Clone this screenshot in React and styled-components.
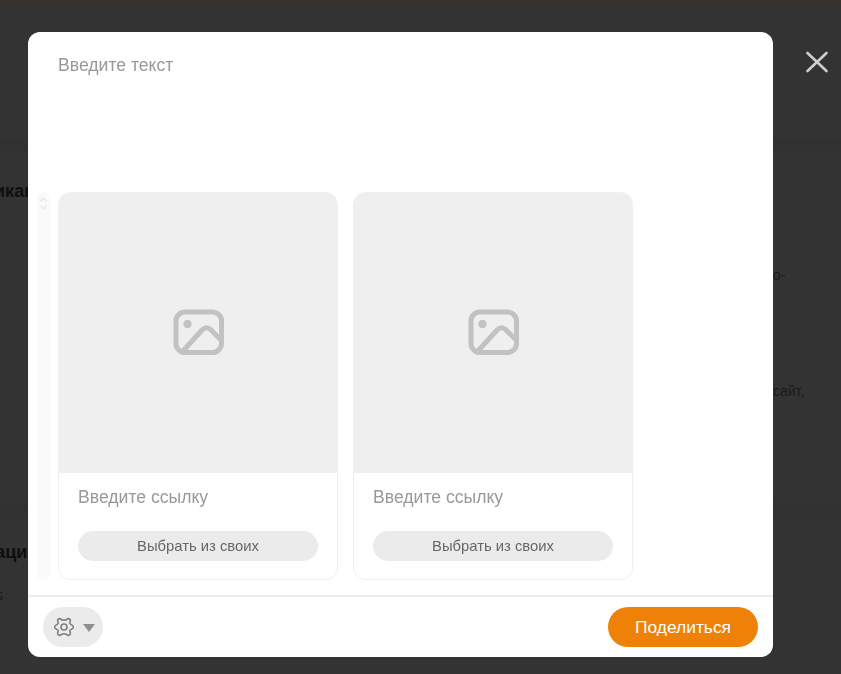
import styled, { createGlobalStyle } from "styled-components";

const GlobalStyle = createGlobalStyle`
  html, body {
    margin: 0;
    height: 100%;
    overflow: hidden;
    background: #333333;
    font-family: "Liberation Sans", Arial, sans-serif;
  }
`;

function ImageIcon() {
  return (
    <svg width="52" height="46" viewBox="0 0 52 46" fill="none" stroke="#c2c2c2" strokeWidth="5">
      <rect x="3" y="3" width="45.5" height="40.5" rx="9" />
      <circle cx="14.5" cy="15" r="4.2" fill="#c2c2c2" stroke="none" />
      <path d="M10 42 L29 21 C31.5 18 35 18 37.5 20.5 L48 31" />
    </svg>
  );
}

function GearIcon() {
  return (
    <svg width="20" height="20" viewBox="0 0 20 20" fill="none" stroke="#808080" strokeWidth="1.6" strokeLinejoin="round">
      <path d="M10 3.3 C13 3.3 13.5 .6 15.6 2 C17.6 3.4 15.2 5.2 16 6.7 C16.8 8 19.4 8 19.4 10 C19.4 12 16.8 12 16 13.3 C15.2 14.8 17.6 16.6 15.6 18 C13.5 19.4 13 16.7 10 16.7 C7 16.7 6.5 19.4 4.4 18 C2.4 16.6 4.8 14.8 4 13.3 C3.2 12 .6 12 .6 10 C.6 8 3.2 8 4 6.7 C4.8 5.2 2.4 3.4 4.4 2 C6.5 .6 7 3.3 10 3.3 Z" />
      <circle cx="10" cy="10" r="3" />
    </svg>
  );
}

function CloseIcon() {
  return (
    <svg width="24" height="24" viewBox="0 0 24 24" stroke="#cfcfcf" strokeWidth="2.6" strokeLinecap="round">
      <path d="M2.5 3 L21.5 21 M21.5 3 L2.5 21" />
    </svg>
  );
}

function ScrollArrows() {
  return (
    <svg width="9" height="15" viewBox="0 0 9 15" fill="none" stroke="#e9e9e9" strokeWidth="1.5">
      <path d="M1.5 5.5 L4.5 2 L7.5 5.5" />
      <path d="M1.5 9.5 L4.5 13 L7.5 9.5" />
    </svg>
  );
}

function LinkCard() {
  return (
    <Card>
      <Preview>
        <ImageIcon />
      </Preview>
      <CardBody>
        <LinkField>Введите ссылку</LinkField>
        <PickButton>Выбрать из своих</PickButton>
      </CardBody>
    </Card>
  );
}

export default function App() {
  return (
    <>
      <GlobalStyle />
      <Page>
        <TopStrip />
        <Band $height={135} />
        <Gutter $height={14} />
        <Section $height={351} $pad={28}>
          <SectionTitle $shift={-51}>Публикации</SectionTitle>
          <Divider $gap={10} />
          <SideText $gap={53}>о-</SideText>
          <SideText $gap={98}>сайт,</SideText>
          <Divider $gap={3} />
        </Section>
        <Gutter $height={16} />
        <Section $height={155} $pad={22}>
          <SectionTitle $shift={-70}>Публикации</SectionTitle>
          <Divider $gap={14} />
          <FooterNote>s</FooterNote>
        </Section>
      </Page>
      <Overlay>
        <Modal>
          <TextArea>Введите текст</TextArea>
          <Attachments>
            <ScrollTrack>
              <ScrollArrows />
            </ScrollTrack>
            <LinkCard />
            <LinkCard />
          </Attachments>
          <Footer>
            <SettingsButton>
              <GearIcon />
              <Caret />
            </SettingsButton>
            <ShareButton>Поделиться</ShareButton>
          </Footer>
        </Modal>
        <CloseButton>
          <CloseIcon />
        </CloseButton>
      </Overlay>
    </>
  );
}

const Page = styled.div`
  display: flex;
  flex-direction: column;
  height: 674px;
  overflow: hidden;
`;

const TopStrip = styled.div`
  height: 3px;
  flex: none;
  background: #38322e;
`;

const Band = styled.div`
  height: ${({ $height }) => $height}px;
  flex: none;
  background: #333333;
`;

const Gutter = styled.div`
  height: ${({ $height }) => $height}px;
  flex: none;
  background: #313131;
`;

const Section = styled.section`
  height: ${({ $height }) => $height}px;
  flex: none;
  display: flex;
  flex-direction: column;
  box-sizing: border-box;
  padding-top: ${({ $pad }) => $pad}px;
  background: #333333;
`;

const SectionTitle = styled.h3`
  margin: 0 0 0 ${({ $shift }) => $shift}px;
  font-size: 18px;
  line-height: 22px;
  font-weight: 700;
  white-space: nowrap;
  color: #0e0e0e;
`;

const Divider = styled.div`
  height: 1px;
  flex: none;
  width: 40px;
  margin: ${({ $gap }) => $gap}px 0 0 775px;
  background: #303030;
`;

const SideText = styled.span`
  margin: ${({ $gap }) => $gap}px 0 0 773px;
  font-size: 14px;
  line-height: 18px;
  color: #1a1a1a;
`;

const FooterNote = styled.span`
  margin: 8px 0 0 -4px;
  font-size: 14px;
  line-height: 18px;
  color: #1a1a1a;
`;

const Overlay = styled.div`
  position: fixed;
  inset: 0;
`;

const Modal = styled.div`
  position: absolute;
  top: 32px;
  left: 28px;
  width: 745px;
  height: 625px;
  display: flex;
  flex-direction: column;
  box-sizing: border-box;
  background: #fff;
  border-radius: 12px;
  overflow: hidden;
`;

const TextArea = styled.div`
  height: 160px;
  flex: none;
  box-sizing: border-box;
  padding: 23px 30px 0;
  font-size: 17.6px;
  line-height: 20px;
  color: #999;
`;

const Attachments = styled.div`
  display: flex;
  height: 388px;
  flex: none;
  padding-left: 9px;
  gap: 15px;
`;

const ScrollTrack = styled.div`
  width: 13px;
  flex: none;
  margin-right: -7px;
  background: #fafafa;
  border-radius: 6px;
  display: flex;
  justify-content: center;
  padding-top: 4px;
  box-sizing: border-box;
`;

const Card = styled.div`
  width: 280px;
  flex: none;
  display: flex;
  flex-direction: column;
  box-sizing: border-box;
  border: 1px solid #f0f0f0;
  border-radius: 12px;
  overflow: hidden;
`;

const Preview = styled.div`
  height: 280px;
  flex: none;
  display: flex;
  align-items: center;
  justify-content: center;
  box-sizing: border-box;
  padding: 0 0 2px 2px;
  background: #efefef;
`;

const CardBody = styled.div`
  display: flex;
  flex-direction: column;
  padding: 14px 19px 0;
`;

const LinkField = styled.div`
  font-size: 17.6px;
  line-height: 20px;
  color: #999;
`;

const PickButton = styled.button`
  margin-top: 24px;
  height: 30px;
  padding: 0;
  border: 0;
  border-radius: 15px;
  background: #ebebeb;
  font-family: inherit;
  font-size: 14.8px;
  color: #666;
`;

const Footer = styled.div`
  flex: 1;
  display: flex;
  align-items: center;
  justify-content: space-between;
  margin-top: 15px;
  padding: 0 15px;
  border-top: 2px solid #ececec;
`;

const SettingsButton = styled.button`
  width: 60px;
  height: 40px;
  display: flex;
  align-items: center;
  gap: 9px;
  padding: 0 0 0 11px;
  border: 0;
  border-radius: 20px;
  background: #ebebeb;
`;

const Caret = styled.span`
  width: 0;
  height: 0;
  border-left: 6px solid transparent;
  border-right: 6px solid transparent;
  border-top: 8px solid #8f8f8f;
  margin-top: 1px;
`;

const ShareButton = styled.button`
  width: 150px;
  height: 40px;
  border: 0;
  border-radius: 20px;
  background: #ee8208;
  color: #fff;
  font-family: inherit;
  font-size: 17.4px;
`;

const CloseButton = styled.button`
  position: absolute;
  top: 50px;
  left: 805px;
  width: 24px;
  height: 24px;
  padding: 0;
  border: 0;
  background: transparent;
  line-height: 0;
`;
